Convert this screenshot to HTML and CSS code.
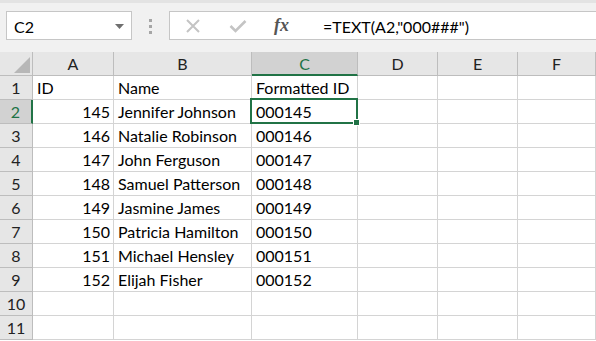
FILE: index.html
```html
<!DOCTYPE html>
<html lang="en">
<head>
    <meta charset="UTF-8">
    <title>TEXT formula</title>
    <link rel="stylesheet" href="styles.css">
</head>
<body>

<div class="toolbar">
    <div class="namebox">
        <span>C2</span>
        <svg class="drop" width="9" height="5" viewBox="0 0 9 5"><path d="M0 0h9L4.5 5z" fill="#6f6f6f"/></svg>
    </div>
    <div class="grip"><i></i><i></i><i></i></div>
    <div class="formula-box">
        <svg class="icon" width="16" height="16" viewBox="0 0 16 16"><path d="M2 2l12 12M14 2L2 14" stroke="#c4c4c4" stroke-width="2"/></svg>
        <svg class="icon" width="18" height="16" viewBox="0 0 18 16"><path d="M1.5 8l5 5L16.5 3" stroke="#c4c4c4" stroke-width="2.6" fill="none"/></svg>
        <span class="fx">fx</span>
        <span class="formula">=TEXT(A2,"000###")</span>
    </div>
</div>

<div class="sheet">
    <div class="hd corner"><svg width="16" height="16" viewBox="0 0 16 16"><path d="M16 0V16H0z" fill="#b7b7b7"/></svg></div>
    <div class="hd col">A</div>
    <div class="hd col">B</div>
    <div class="hd col on">C</div>
    <div class="hd col">D</div>
    <div class="hd col">E</div>
    <div class="hd col">F</div>

    <div class="hd row">1</div>
    <div class="cell">ID</div>
    <div class="cell">Name</div>
    <div class="cell">Formatted ID</div>
    <div class="cell"></div><div class="cell"></div><div class="cell"></div>

    <div class="hd row on">2</div>
    <div class="cell num">145</div>
    <div class="cell">Jennifer Johnson</div>
    <div class="cell active">000145</div>
    <div class="cell"></div><div class="cell"></div><div class="cell"></div>

    <div class="hd row">3</div>
    <div class="cell num">146</div>
    <div class="cell">Natalie Robinson</div>
    <div class="cell">000146</div>
    <div class="cell"></div><div class="cell"></div><div class="cell"></div>

    <div class="hd row">4</div>
    <div class="cell num">147</div>
    <div class="cell">John Ferguson</div>
    <div class="cell">000147</div>
    <div class="cell"></div><div class="cell"></div><div class="cell"></div>

    <div class="hd row">5</div>
    <div class="cell num">148</div>
    <div class="cell">Samuel Patterson</div>
    <div class="cell">000148</div>
    <div class="cell"></div><div class="cell"></div><div class="cell"></div>

    <div class="hd row">6</div>
    <div class="cell num">149</div>
    <div class="cell">Jasmine James</div>
    <div class="cell">000149</div>
    <div class="cell"></div><div class="cell"></div><div class="cell"></div>

    <div class="hd row">7</div>
    <div class="cell num">150</div>
    <div class="cell">Patricia Hamilton</div>
    <div class="cell">000150</div>
    <div class="cell"></div><div class="cell"></div><div class="cell"></div>

    <div class="hd row">8</div>
    <div class="cell num">151</div>
    <div class="cell">Michael Hensley</div>
    <div class="cell">000151</div>
    <div class="cell"></div><div class="cell"></div><div class="cell"></div>

    <div class="hd row">9</div>
    <div class="cell num">152</div>
    <div class="cell">Elijah Fisher</div>
    <div class="cell">000152</div>
    <div class="cell"></div><div class="cell"></div><div class="cell"></div>

    <div class="hd row">10</div>
    <div class="cell"></div><div class="cell"></div><div class="cell"></div>
    <div class="cell"></div><div class="cell"></div><div class="cell"></div>

    <div class="hd row">11</div>
    <div class="cell"></div><div class="cell"></div><div class="cell"></div>
    <div class="cell"></div><div class="cell"></div><div class="cell"></div>
</div>

</body>
</html>
```

FILE: styles.css
```css
body {
    margin: 0;
    font-family: Lato, "Open Sans", sans-serif;
    font-size: 16px;
    color: #000;
    background-color: #fff;
}

.toolbar {
    height: 52px;
    box-sizing: border-box;
    border-top: 3px solid #e3e3e3;
    background-color: #f1f1f1;
    padding: 8px 0 0 6px;
    display: flex;
    align-items: flex-start;
}

.namebox {
    width: 126px;
    height: 29px;
    box-sizing: border-box;
    background-color: #fff;
    border: 1px solid #c6c6c6;
    display: flex;
    align-items: center;
    padding: 0 7px 0 7px;
}

.namebox span {
    flex: 1;
    padding-top: 1px;
}

.drop {
    margin-top: 1px;
}

.grip {
    width: 3px;
    margin: 8px 17px 0 17px;
    display: flex;
    flex-direction: column;
    gap: 3px;
}

.grip i {
    display: block;
    width: 3px;
    height: 3px;
    background-color: #a6a6a6;
}

.formula-box {
    flex: 1;
    height: 29px;
    box-sizing: border-box;
    background-color: #fff;
    border: 1px solid #c6c6c6;
    border-right: none;
    display: flex;
    align-items: center;
    padding-left: 15px;
}

.icon {
    margin-right: 28px;
}

.fx {
    font-family: "Liberation Serif", serif;
    font-style: italic;
    font-weight: bold;
    font-size: 18px;
    color: #555;
    width: 16px;
    margin-left: -1px;
}

.formula {
    margin-left: 33px;
    padding-top: 1px;
}

.sheet {
    display: grid;
    grid-template-columns: 33px 81px 138px 106px 80px 80px 78px;
    grid-auto-rows: 24px;
}

.hd {
    background-color: #e6e6e6;
    box-sizing: border-box;
    border-right: 1px solid #bdbdbd;
    border-bottom: 1px solid #bdbdbd;
    color: #222;
    display: flex;
    align-items: flex-end;
    justify-content: center;
    padding-bottom: 2px;
}

.hd.corner {
    align-items: flex-end;
    justify-content: flex-end;
    padding: 0 2px 2px 0;
}

.hd.col.on {
    background-color: #d2d2d2;
    border-bottom: 2px solid #217346;
    padding-bottom: 1px;
    color: #217346;
}

.hd.row.on {
    background-color: #d2d2d2;
    border-right: 2px solid #217346;
    color: #217346;
}

.cell {
    box-sizing: border-box;
    border-right: 1px solid #d4d4d4;
    border-bottom: 1px solid #d4d4d4;
    display: flex;
    align-items: flex-end;
    padding: 0 3px 2px 4px;
    white-space: nowrap;
    overflow: visible;
}

.cell.num {
    justify-content: flex-end;
}

.cell.active {
    position: relative;
}

.cell.active::after {
    content: "";
    position: absolute;
    top: -2px;
    left: -2px;
    right: -1px;
    bottom: -1px;
    border: 2px solid #217346;
}

.cell.active::before {
    content: "";
    position: absolute;
    right: -3px;
    bottom: -3px;
    width: 5px;
    height: 5px;
    background-color: #217346;
    border: 1px solid #fff;
    z-index: 1;
}
```
